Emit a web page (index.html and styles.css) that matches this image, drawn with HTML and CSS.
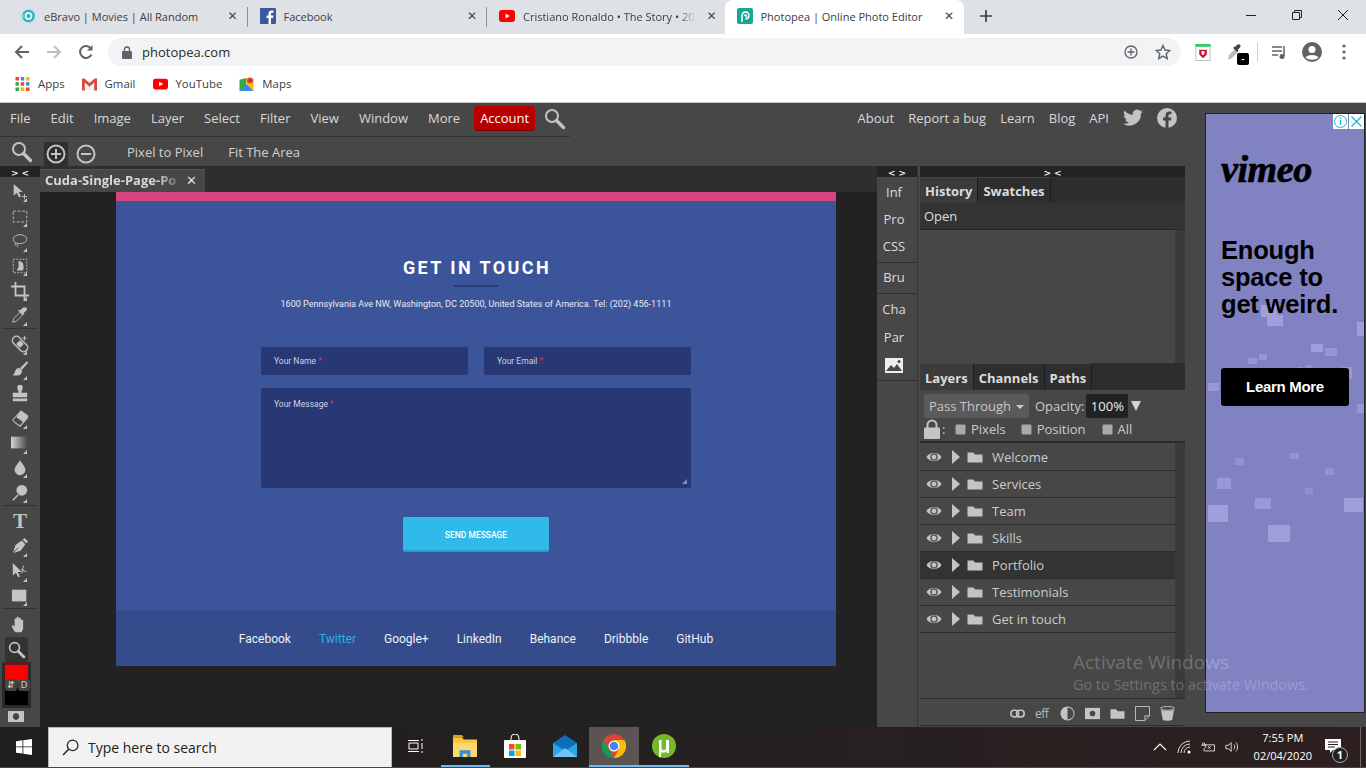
FILE: index.html
```html
<!DOCTYPE html>
<html lang="en">
<head>
    <meta charset="UTF-8">
    <title>Photopea | Online Photo Editor</title>
    <link rel="stylesheet" href="styles.css">
</head>
<body>
    <svg class="sprite" width="0" height="0">
        <symbol id="i-search" viewBox="0 0 22 22"><circle cx="8" cy="8" r="6" fill="none" stroke="currentColor" stroke-width="2"/><path d="M12.5 12.5l7 7" stroke="currentColor" stroke-width="3.4" stroke-linecap="round"/></symbol>
        <symbol id="i-eye" viewBox="0 0 16 12"><path d="M0.5 6C3 0.5 13 0.5 15.5 6 13 11.5 3 11.5 0.5 6z" fill="#c4c4c4"/><circle cx="8" cy="6" r="3.8" fill="#5a5a5a"/><circle cx="8" cy="6" r="2.3" fill="#c4c4c4"/></symbol>
        <symbol id="i-folder" viewBox="0 0 16 12"><path d="M0.5 1.5h6l1.5 2h7.5v8h-15z" fill="#c4c4c4"/></symbol>
        <symbol id="i-yt" viewBox="0 0 16 12"><rect width="16" height="12" rx="3" fill="#f00"/><path d="M6.5 3.5l4.500 2.500-4.500 2.500z" fill="#fff"/></symbol>
    </svg>

    <!-- browser chrome -->
    <div class="tabstrip">
        <div class="tab">
            <svg class="favicon" viewBox="0 0 16 16"><circle cx="8.5" cy="8" r="6.5" fill="#38b6c6"/><circle cx="8.5" cy="8" r="3" fill="none" stroke="#fff" stroke-width="1.5"/><circle cx="2.5" cy="8" r="1.5" fill="#8fd6df"/></svg>
            <span class="tab-title">eBravo | Movies | All Random</span>
            <span class="tab-x">✕</span>
        </div>
        <div class="tab">
            <svg class="favicon" viewBox="0 0 16 16"><rect width="16" height="16" rx="1" fill="#3b5998"/><path d="M11 16V10h2l.4-2.500H11V6c0-.8.3-1.300 1.300-1.300h1.200V2.500c-.6-.1-1.200-.1-1.800-.1C9.800 2.400 8.500 3.500 8.500 5.600v1.900H6.500V10h2v6z" fill="#fff"/></svg>
            <span class="tab-title">Facebook</span>
            <span class="tab-x">✕</span>
        </div>
        <div class="tab">
            <svg class="favicon" viewBox="0 0 16 16"><use href="#i-yt" width="16" height="12" y="2"/></svg>
            <span class="tab-title tab-fade">Cristiano Ronaldo • The Story • 20</span>
            <span class="tab-x">✕</span>
        </div>
        <div class="tab tab-active">
            <svg class="favicon" viewBox="0 0 16 16"><rect width="16" height="16" rx="2" fill="#18a497"/><path d="M5 14V7.500a3.500 3.500 0 1 1 3.500 3.500M7.500 8a1 1 0 1 1 1 1" fill="none" stroke="#fff" stroke-width="1.5"/></svg>
            <span class="tab-title">Photopea | Online Photo Editor</span>
            <span class="tab-x">✕</span>
        </div>
        <svg class="newtab" viewBox="0 0 12 12"><path d="M6 0v12M0 6h12" stroke="#3c4043" stroke-width="1.7"/></svg>
        <div class="winbtns">
            <svg viewBox="0 0 12 12"><path d="M1 6.5h10" stroke="#222"/></svg>
            <svg viewBox="0 0 12 12"><path d="M1.500 3.500h7v7h-7zM3.500 3.500v-2h7v7h-2" fill="none" stroke="#222"/></svg>
            <svg viewBox="0 0 12 12"><path d="M1 1l10 10M11 1L1 11" stroke="#222"/></svg>
        </div>
    </div>

    <div class="addressbar">
        <svg class="navbtn" viewBox="0 0 16 16"><path d="M15 8H2M8 2L2 8l6 6" fill="none" stroke="#5f6368" stroke-width="2"/></svg>
        <svg class="navbtn" viewBox="0 0 16 16"><path d="M1 8h13M8 2l6 6-6 6" fill="none" stroke="#bcbec1" stroke-width="2"/></svg>
        <svg class="navbtn" viewBox="0 0 16 16"><path d="M13.500 10.500A6 6 0 1 1 13 4.500" fill="none" stroke="#5f6368" stroke-width="2"/><path d="M14.500 1v5.500H9z" fill="#5f6368"/></svg>
        <div class="omnibox">
            <svg class="lock" viewBox="0 0 10 13"><path d="M2.500 6V3.500a2.500 2.500 0 0 1 5 0V6" fill="none" stroke="#5f6368" stroke-width="1.3"/><rect y="5" width="10" height="8" rx="1" fill="#5f6368"/></svg>
            <span class="url">photopea.com</span>
            <svg class="omni-icon add" viewBox="0 0 14 14"><circle cx="7" cy="7" r="6" fill="none" stroke="#5f6368" stroke-width="1.3"/><path d="M7 3.500v7M3.500 7h7" stroke="#5f6368" stroke-width="1.3"/></svg>
            <svg class="omni-icon" viewBox="0 0 16 16"><path d="M8 1.500l2 4.500 4.800.5-3.600 3.200 1 4.800L8 12.100l-4.200 2.400 1-4.800L1.200 6.500 6 6z" fill="none" stroke="#5f6368" stroke-width="1.4"/></svg>
        </div>
        <div class="ext-icons">
            <svg class="ext ext-mcafee" viewBox="0 0 16 18"><rect x=".5" y=".5" width="15" height="17" fill="#fff" stroke="#bbb"/><rect width="16" height="3" fill="#2ecc71"/><path d="M4 6h8v5l-4 4-4-4z" fill="#c8102e"/><path d="M6.500 7.500h3v3l-1.500 1.500-1.500-1.500z" fill="#fff"/></svg>
            <div class="ext ext-dropper">
                <svg viewBox="0 0 16 18"><path d="M1 17l1-5 6-6 3 3-6 6z" fill="#b9bbbe"/><path d="M8 4l2-2c1-1 2.200-1 3-.2s.8 2-.2 3l-2 2 .7.700-1.400 1.400-4-4 1.400-1.400z" fill="#444"/></svg>
                <span class="ext-badge">-</span>
            </div>
            <span class="ext-sep"></span>
            <svg class="ext ext-list" viewBox="0 0 16 16"><path d="M1 3h10M1 7h10M1 11h6" stroke="#5f6368" stroke-width="1.5"/><path d="M13 2v10" stroke="#5f6368" stroke-width="1.5"/><circle cx="11" cy="12.5" r="2.5" fill="#5f6368"/></svg>
            <svg class="ext ext-avatar" viewBox="0 0 20 20"><circle cx="10" cy="10" r="10" fill="#5f6368"/><circle cx="10" cy="7.5" r="3.5" fill="#fff"/><path d="M3.500 15.500C5 12 15 12 16.500 15.500 13 18.500 7 18.500 3.500 15.500z" fill="#fff"/></svg>
            <svg class="ext ext-dots" viewBox="0 0 4 16"><circle cx="2" cy="2" r="1.6" fill="#5f6368"/><circle cx="2" cy="8" r="1.6" fill="#5f6368"/><circle cx="2" cy="14" r="1.6" fill="#5f6368"/></svg>
        </div>
    </div>

    <div class="bookmarks">
        <a class="bm">
            <svg viewBox="0 0 14 14"><g><rect width="3.5" height="3.5" fill="#ea4335"/><rect x="5.2" width="3.5" height="3.5" fill="#4285f4"/><rect x="10.5" width="3.5" height="3.5" fill="#fbbc04"/><rect y="5.2" width="3.5" height="3.5" fill="#34a853"/><rect x="5.2" y="5.2" width="3.5" height="3.5" fill="#ea4335"/><rect x="10.5" y="5.2" width="3.5" height="3.5" fill="#4285f4"/><rect y="10.5" width="3.5" height="3.5" fill="#34a853"/><rect x="5.2" y="10.5" width="3.5" height="3.5" fill="#fbbc04"/><rect x="10.5" y="10.5" width="3.5" height="3.5" fill="#ea4335"/></g></svg>
            Apps
        </a>
        <a class="bm">
            <svg viewBox="0 0 16 14"><path d="M3 5.500L8 10l5-4.500V14H3z" fill="#f1f1f1"/><path d="M0 1h2.500L8 6l5.500-5H16v13h-3V5.500L8 10 3 5.500V14H0z" fill="#d54c3f"/></svg>
            Gmail
        </a>
        <a class="bm">
            <svg viewBox="0 0 16 12"><use href="#i-yt"/></svg>
            YouTube
        </a>
        <a class="bm">
            <svg viewBox="0 0 16 16"><path d="M0 3l8-2v15H0z" fill="#34a853"/><path d="M0 16l9-8 7 8z" fill="#4285f4"/><path d="M8 1l8 1v14l-8-8z" fill="#fbbc04"/><circle cx="12" cy="4" r="3.5" fill="#ea4335"/><circle cx="12" cy="4" r="1.2" fill="#a52714"/></svg>
            Maps
        </a>
    </div>

    <!-- photopea -->
    <div class="app">
        <div class="editor">
            <div class="menubar">
                <nav class="menu-left">
                    <span>File</span><span>Edit</span><span>Image</span><span>Layer</span><span>Select</span><span>Filter</span><span>View</span><span>Window</span><span>More</span>
                    <span class="account">Account</span>
                    <svg class="menu-search"><use href="#i-search"/></svg>
                </nav>
                <nav class="menu-right">
                    <span>About</span><span>Report a bug</span><span>Learn</span><span>Blog</span><span>API</span>
                    <svg class="social" viewBox="0 0 24 20"><path d="M24 2.400c-.9.400-1.800.7-2.800.8 1-.6 1.800-1.600 2.200-2.700-1 .6-2 1-3.100 1.200A4.900 4.900 0 0 0 11.900 6.200C7.800 6 4.200 4 1.700.9c-1.300 2.200-.6 5.100 1.500 6.500-.8 0-1.600-.2-2.200-.6 0 2.300 1.600 4.400 3.900 4.900-.7.200-1.500.2-2.200.1.600 2 2.400 3.400 4.600 3.400A9.900 9.900 0 0 1 0 16.900 14 14 0 0 0 21.500 4.500c1-.7 1.800-1.300 2.500-2.100z" fill="#c4c4c4"/></svg>
                    <svg class="social" viewBox="0 0 20 20"><circle cx="10" cy="10" r="10" fill="#c4c4c4"/><path d="M11.500 20v-7.500h2.500l.4-3h-2.900V7.700c0-.9.300-1.400 1.500-1.400h1.500V3.600c-.3 0-1.200-.1-2.200-.1-2.200 0-3.800 1.400-3.800 3.800v2.200H6v3h2.500V20z" fill="#474747"/></svg>
                </nav>
            </div>

            <div class="optionsbar">
                <svg class="opt-search"><use href="#i-search"/></svg>
                <span class="zoombtn zoombtn-on"><svg viewBox="0 0 20 20"><circle cx="10" cy="10" r="8.5" fill="none" stroke="#c4c4c4" stroke-width="2"/><path d="M10 5v10M5 10h10" stroke="#c4c4c4" stroke-width="2"/></svg></span>
                <span class="zoombtn"><svg viewBox="0 0 20 20"><circle cx="10" cy="10" r="8.5" fill="none" stroke="#c4c4c4" stroke-width="2"/><path d="M5 10h10" stroke="#c4c4c4" stroke-width="2"/></svg></span>
                <span class="opt-link first">Pixel to Pixel</span>
                <span class="opt-link">Fit The Area</span>
            </div>

            <div class="workspace">
                <div class="toolbar">
                    <div class="collapse">&gt; &lt;</div>
                    <div class="tools">
                        <div class="tool more"><svg viewBox="0 0 20 20"><path d="M3 1v13l3.500-3 2.500 5 2-1-2.500-5H13z" fill="#c4c4c4"/><path d="M15 12v6M12 15h6" stroke="#c4c4c4"/></svg></div>
                        <div class="tool more"><svg viewBox="0 0 20 20"><rect x="2.5" y="3.5" width="15" height="12" fill="none" stroke="#c4c4c4" stroke-dasharray="3 2"/></svg></div>
                        <div class="tool more"><svg viewBox="0 0 20 20"><ellipse cx="10" cy="8" rx="7.5" ry="5" fill="none" stroke="#c4c4c4"/><path d="M5 12c-2 2 0 3 1 2s2 1 1 3" fill="none" stroke="#c4c4c4"/></svg></div>
                        <div class="tool more"><svg viewBox="0 0 20 20"><rect x="2.5" y="2.5" width="15" height="15" fill="none" stroke="#c4c4c4" stroke-dasharray="2 1.5"/><path d="M8 5c4-1 6 2 6 6s-1 4-4 4H6c3-3 3-6 2-10z" fill="#c4c4c4"/></svg></div>
                        <div class="tool more"><svg viewBox="0 0 20 20"><path d="M5 0v15h15M0 5h15v15" fill="none" stroke="#c4c4c4" stroke-width="2"/></svg></div>
                        <div class="tool more"><svg viewBox="0 0 20 20"><path d="M2 18l1-4 7-7 3 3-7 7z" fill="none" stroke="#c4c4c4"/><path d="M10 5l3-3c1-1 3-1 4 0s1 2 0 3l-3 3 1 1-2 1-5-5 1-1z" fill="#c4c4c4"/></svg></div>
                        <div class="tool-sep"></div>
                        <div class="tool more"><svg viewBox="0 0 20 20"><g transform="rotate(-45 10 10)"><rect x="5.5" y="0" width="9" height="20" rx="4" fill="none" stroke="#c4c4c4" stroke-width="1.5"/><rect x="7" y="7" width="6" height="6" fill="#c4c4c4"/></g><path d="M15 1v5M12.500 3.500h5" stroke="#c4c4c4"/></svg></div>
                        <div class="tool more"><svg viewBox="0 0 20 20"><path d="M18 1l-8 8 2 2 7-8z" fill="#c4c4c4"/><path d="M9 9c-5 0-4 6-7 8 5 1 11 0 10-6z" fill="#c4c4c4"/></svg></div>
                        <div class="tool"><svg viewBox="0 0 20 20"><path d="M7 2.500a3 3 0 0 1 6 0c0 3-1.500 4-1.500 6H18v5H2v-5h6.500C8.500 6.500 7 5.500 7 2.500zM2 15h16v3H2z" fill="#c4c4c4"/></svg></div>
                        <div class="tool more"><svg viewBox="0 0 20 20"><path d="M11 1l7 5a2 2 0 0 1 0 3l-8 9-7-5c-1-1-1-2 0-3l8-9z" fill="none" stroke="#c4c4c4" stroke-width="1.2"/><path d="M11 1l7 5a2 2 0 0 1 0 3l-4 5-8-6z" fill="#c4c4c4"/></svg></div>
                        <div class="tool more"><svg viewBox="0 0 20 20"><defs><linearGradient id="grad"><stop offset="0" stop-color="#d4d4d4"/><stop offset="1" stop-color="#4a4a4a"/></linearGradient></defs><rect x="0" y="3" width="18" height="13" fill="url(#grad)"/></svg></div>
                        <div class="tool more"><svg viewBox="0 0 20 20"><path d="M10 1c1 3 6 7 6 11a6 6 0 0 1-12 0c0-4 5-8 6-11z" fill="#c4c4c4"/></svg></div>
                        <div class="tool more"><svg viewBox="0 0 20 20"><circle cx="12" cy="7" r="6" fill="#c4c4c4"/><path d="M8 12l-6 6" stroke="#c4c4c4" stroke-width="1.5"/></svg></div>
                        <div class="tool-sep"></div>
                        <div class="tool tool-type">T</div>
                        <div class="tool more"><svg viewBox="0 0 20 20"><path d="M2 18l3-9 7-5 4 4-5 7z" fill="#c4c4c4"/><path d="M13 3l2-2 4 4-2 2z" fill="#c4c4c4"/><path d="M2 18l6-6" stroke="#474747"/></svg></div>
                        <div class="tool more"><svg viewBox="0 0 20 20"><path d="M2 1v14l3.500-3 2.500 5 2-1-2.500-5H12z" fill="#c4c4c4"/><path d="M14 4l-2 9M11 8l6 3" stroke="#c4c4c4"/></svg></div>
                        <div class="tool more"><svg viewBox="0 0 20 20"><rect x="1" y="3" width="16" height="13" fill="#c4c4c4"/></svg></div>
                        <div class="tool-sep"></div>
                        <div class="tool"><svg viewBox="0 0 20 20"><path d="M5 18c-2-2-4-5-4-7 0-1 2-1 3 1V4c0-1.500 2-1.500 2 0V2c0-1.500 2.500-1.500 2.500 0v1c0-1.500 2.500-1.500 2.500 0v2c0-1.500 2.500-1 2.500 0v8c0 2-1 4-2 5z" fill="#c4c4c4"/></svg></div>
                        <div class="tool tool-on"><svg viewBox="0 0 22 22"><use href="#i-search"/></svg></div>
                        <div class="swatches">
                            <span class="sw-fg"></span>
                            <span class="sw-bg"></span>
                            <span class="sw-swap">⇵</span>
                            <span class="sw-def">D</span>
                        </div>
                        <div class="mask-btn"></div>
                    </div>
                </div>

                <div class="docarea">
                    <div class="doctabs">
                        <div class="doctab"><span class="doctab-name">Cuda-Single-Page-Po</span><span class="doctab-x">✕</span></div>
                    </div>
                    <div class="canvas">
                        <div class="pinkbar"></div>
                        <section class="contact">
                            <h1>GET IN TOUCH</h1>
                            <div class="rule"></div>
                            <p class="address">1600 Pennsylvania Ave NW, Washington, DC 20500, United States of America. Tel: (202) 456-1111</p>
                            <div class="form-row">
                                <div class="field">Your Name <i>*</i></div>
                                <div class="field">Your Email <i>*</i></div>
                            </div>
                            <div class="field field-msg">Your Message <i>*</i>
                                <svg class="grip" viewBox="0 0 7 7"><path d="M6 1v5H1z" fill="#7f8fbd"/></svg>
                            </div>
                            <div class="sendbtn">SEND MESSAGE</div>
                        </section>
                        <footer class="sitefoot">
                            <span>Facebook</span><span class="hot">Twitter</span><span>Google+</span><span>LinkedIn</span><span>Behance</span><span>Dribbble</span><span>GitHub</span>
                        </footer>
                    </div>
                </div>

                <div class="sidecol">
                    <div class="collapse">&lt; &gt;</div>
                    <div class="side-group">
                        <span>Inf</span><span>Pro</span><span>CSS</span>
                    </div>
                    <div class="side-group">
                        <span>Bru</span>
                    </div>
                    <div class="side-group">
                        <span>Cha</span><span>Par</span>
                        <span class="side-img"><svg viewBox="0 0 18 15"><rect width="18" height="15" fill="#eee"/><path d="M1 13l5-6 3 3 3-4 5 7z" fill="#474747"/><circle cx="14" cy="3.500" r="1.500" fill="#474747"/></svg></span>
                    </div>
                </div>

                <div class="panels">
                    <div class="collapse">&gt; &lt;</div>
                    <div class="ptabs">
                        <span class="ptab on">History</span><span class="ptab">Swatches</span>
                    </div>
                    <div class="hist-open">Open</div>
                    <div class="hist-list"><div class="pane"></div><div class="scroll"></div></div>

                    <div class="ptabs ptabs-tall">
                        <span class="ptab on">Layers</span><span class="ptab">Channels</span><span class="ptab">Paths</span>
                    </div>
                    <div class="layer-opts">
                        <div class="opt-row">
                            <span class="blend">Pass Through <i class="caret"></i></span>
                            <span class="opa-label">Opacity:</span>
                            <span class="opa-val">100%</span>
                            <i class="opa-tri"></i>
                        </div>
                        <div class="lock-row">
                            <svg class="lockico" viewBox="0 0 16 20"><path d="M3.500 9V6a4.500 4.500 0 0 1 9 0v3" fill="none" stroke="#c4c4c4" stroke-width="2"/><rect y="8.500" width="16" height="11.500" rx="1" fill="#c4c4c4"/></svg>
                            <span class="colon">:</span>
                            <label class="chk"><i></i>Pixels</label>
                            <label class="chk"><i></i>Position</label>
                            <label class="chk"><i></i>All</label>
                        </div>
                    </div>
                    <div class="layers">
                        <div class="layer-list">
                            <div class="layer"><svg class="eye"><use href="#i-eye"/></svg><i class="arrow"></i><svg class="folder"><use href="#i-folder"/></svg>Welcome</div>
                            <div class="layer"><svg class="eye"><use href="#i-eye"/></svg><i class="arrow"></i><svg class="folder"><use href="#i-folder"/></svg>Services</div>
                            <div class="layer"><svg class="eye"><use href="#i-eye"/></svg><i class="arrow"></i><svg class="folder"><use href="#i-folder"/></svg>Team</div>
                            <div class="layer"><svg class="eye"><use href="#i-eye"/></svg><i class="arrow"></i><svg class="folder"><use href="#i-folder"/></svg>Skills</div>
                            <div class="layer layer-sel"><svg class="eye"><use href="#i-eye"/></svg><i class="arrow"></i><svg class="folder"><use href="#i-folder"/></svg>Portfolio</div>
                            <div class="layer"><svg class="eye"><use href="#i-eye"/></svg><i class="arrow"></i><svg class="folder"><use href="#i-folder"/></svg>Testimonials</div>
                            <div class="layer"><svg class="eye"><use href="#i-eye"/></svg><i class="arrow"></i><svg class="folder"><use href="#i-folder"/></svg>Get in touch</div>
                        </div>
                        <div class="scroll"></div>
                    </div>
                    <div class="layer-foot">
                        <svg viewBox="0 0 16 10" class="lf"><rect x="1" y="1.5" width="8" height="7" rx="3" fill="none" stroke="#c4c4c4" stroke-width="1.8"/><rect x="7" y="1.5" width="8" height="7" rx="3" fill="none" stroke="#c4c4c4" stroke-width="1.8"/></svg>
                        <span class="lf lf-eff">eff</span>
                        <svg viewBox="0 0 16 16" class="lf"><circle cx="8" cy="8" r="7.5" fill="#c4c4c4"/><path d="M8 1.500a6.500 6.500 0 0 1 0 13z" fill="#474747"/></svg>
                        <svg viewBox="0 0 16 12" class="lf"><rect width="16" height="12" fill="#c4c4c4"/><circle cx="8" cy="6" r="3" fill="#474747"/></svg>
                        <svg viewBox="0 0 16 12" class="lf"><use href="#i-folder"/></svg>
                        <svg viewBox="0 0 16 16" class="lf"><path d="M.5.500h15v10l-5 5h-10zM15.500 10.500h-5v5" fill="none" stroke="#c4c4c4"/></svg>
                        <svg viewBox="0 0 16 16" class="lf"><ellipse cx="8" cy="2.500" rx="7.5" ry="2" fill="none" stroke="#c4c4c4"/><path d="M1 4c3 1.500 11 1.500 14 0l-2 11c-2 1-8 1-10 0z" fill="#c4c4c4"/></svg>
                    </div>
                </div>
            </div>
        </div>

        <aside class="adcol">
            <div class="ad">
                <svg class="ad-bits" viewBox="0 0 160 600">
                    <g fill="#a09fdc">
                        <rect x="56" y="192" width="17" height="12"/><rect x="62" y="202" width="16" height="11"/><rect x="152" y="209" width="10" height="14"/>
                        <rect x="106" y="231" width="12" height="8"/><rect x="120" y="235" width="12" height="8" opacity=".7"/><rect x="43" y="245" width="9" height="6" opacity=".7"/>
                        <rect x="54" y="241" width="8" height="6" opacity=".7"/><rect x="92" y="254" width="5" height="4" opacity=".6"/><rect x="101" y="252" width="6" height="4" opacity=".6"/>
                        <rect x="137" y="254" width="10" height="12" opacity=".7"/><rect x="3" y="270" width="11" height="8" opacity=".8"/><rect x="152" y="291" width="10" height="9" opacity=".7"/>
                        <rect x="12" y="365" width="14" height="11" opacity=".8"/><rect x="50" y="385" width="16" height="11" opacity=".8"/><rect x="139" y="385" width="19" height="14"/>
                        <rect x="3" y="392" width="20" height="17"/><rect x="63" y="412" width="22" height="17"/><rect x="120" y="355" width="9" height="7" opacity=".6"/>
                        <rect x="85" y="340" width="9" height="6" opacity=".6"/><rect x="30" y="345" width="9" height="7" opacity=".6"/><rect x="100" y="375" width="8" height="6" opacity=".5"/>
                    </g>
                </svg>
                <div class="ad-close">
                    <svg viewBox="0 0 15 15"><circle cx="7.5" cy="7.5" r="6" fill="none" stroke="#14b8dc"/><path d="M7.500 6v5M7.500 3.500v1.500" stroke="#14b8dc" stroke-width="1.3"/></svg>
                    <svg viewBox="0 0 15 15"><path d="M2.500 2.500l10 10M12.500 2.500l-10 10" stroke="#14b8dc" stroke-width="1.3"/></svg>
                </div>
                <div class="ad-logo">vimeo</div>
                <div class="ad-head">Enough space to get weird.</div>
                <div class="ad-btn">Learn More</div>
            </div>
        </aside>

        <div class="activate">
            <div class="act-1">Activate Windows</div>
            <div class="act-2">Go to Settings to activate Windows.</div>
        </div>
    </div>

    <!-- windows taskbar -->
    <div class="taskbar">
        <svg class="start" viewBox="0 0 16 16"><path d="M0 2.200L6.500 1.300v6.200H0zM7.300 1.200L16 0v7.500H7.300zM0 8.300h6.500v6.300L0 13.800zM7.300 8.300H16V16l-8.700-1.200z" fill="#fff"/></svg>
        <div class="searchbox">
            <svg viewBox="0 0 16 16"><circle cx="10" cy="6" r="5" fill="none" stroke="#222" stroke-width="1.2"/><path d="M6.300 9.700L1 15" stroke="#222" stroke-width="1.4"/></svg>
            Type here to search
        </div>
        <div class="task-apps">
            <span class="app-btn"><svg viewBox="0 0 16 16"><path d="M0 2.500h11M0 13.500h11M1 5h9v6H1zM14 1v2M14 5v6M14 13v2" fill="none" stroke="#fff"/></svg></span>
            <span class="app-btn running"><svg class="big" viewBox="0 0 22 22"><path d="M0 3h8l2 2h12v16H0z" fill="#f6c544"/><path d="M0 1h8l2 2H0z" fill="#d9a520"/><rect y="8" width="22" height="13" fill="#ffd96b"/><path d="M6 21v-6h10v6h-3v-3H9v3z" fill="#2f8fdc"/></svg></span>
            <span class="app-btn"><svg class="big" viewBox="0 0 22 24"><path d="M7 6V4a4 4 0 0 1 8 0v2" fill="none" stroke="#fff"/><rect y="6" width="22" height="18" rx="1" fill="#fff"/><rect x="5" y="10" width="5.5" height="5.5" fill="#f25022"/><rect x="11.5" y="10" width="5.5" height="5.5" fill="#7fba00"/><rect x="5" y="16.5" width="5.5" height="5.5" fill="#00a4ef"/><rect x="11.5" y="16.5" width="5.5" height="5.5" fill="#ffb900"/></svg></span>
            <span class="app-btn"><svg class="big" viewBox="0 0 24 24"><path d="M12 1L0 9v14h24V9z" fill="#0f6cbd"/><path d="M0 9l12 8 12-8v14H0z" fill="#2aa5ea"/><path d="M0 23l12-9 12 9z" fill="#6fc6f5"/></svg></span>
            <span class="app-btn running active"><svg class="big" viewBox="0 0 24 24"><circle cx="12" cy="12" r="12" fill="#db4437"/><path d="M12 24A12 12 0 0 1 1.600 6l5.200 9 5 9z" fill="#0f9d58"/><path d="M12 24a12 12 0 0 0 10.400-18H12l5 9z" fill="#fbbc05"/><circle cx="12" cy="12" r="5.5" fill="#fff"/><circle cx="12" cy="12" r="4.3" fill="#4285f4"/></svg></span>
            <span class="app-btn running"><svg class="big" viewBox="0 0 24 24"><circle cx="12" cy="12" r="12" fill="#76b82a"/><path d="M7 6h2.500v8c0 3 4.500 3 4.500 0V6h3v13h-2.500v-2c-1 2-3.500 2-5 1l-.5 5H7z" fill="#fff"/></svg></span>
        </div>
        <div class="tray">
            <svg class="tray-ico" viewBox="0 0 14 8"><path d="M1 7l6-6 6 6" fill="none" stroke="#fff" stroke-width="1.1"/></svg>
            <svg class="tray-ico" viewBox="0 0 14 14"><path d="M1 13A12 12 0 0 1 13 1M4 13a9 9 0 0 1 9-9M7 13a6 6 0 0 1 6-6" fill="none" stroke="#ddd"/><circle cx="12" cy="12" r="1.5" fill="#fff"/></svg>
            <svg class="tray-ico" viewBox="0 0 16 12"><path d="M4.500 3.500h11v7h-11M2 1v3M4 1v3M0.500 4h5v2l-2 2v3" fill="none" stroke="#eee"/><path d="M8 5l3 3M11 5L8 8" stroke="#eee"/></svg>
            <svg class="tray-ico" viewBox="0 0 16 14"><path d="M1 5h3l3-3v10L4 9H1zM10 4c1.500 1.500 1.500 4.500 0 6M12.500 2c2.500 2.500 2.500 7.500 0 10" fill="none" stroke="#eee"/></svg>
            <div class="clock"><span>7:55 PM</span><span>02/04/2020</span></div>
            <div class="notif">
                <svg viewBox="0 0 16 14"><path d="M0 0h16v11H8l-3 3v-3H0z" fill="#fff"/><path d="M3 3h10M3 5.500h10M3 8h7" stroke="#222"/></svg>
                <span class="notif-num">1</span>
            </div>
        </div>
    </div>
</body>
</html>
```

FILE: styles.css
```css
* {
    box-sizing: border-box;
}
body {
    margin: 0;
    width: 1366px;
    height: 768px;
    overflow: hidden;
    position: relative;
    font-family: "Open Sans", "Noto Sans", sans-serif;
    background: #474747;
}
.sprite {
    position: absolute;
}
i {
    font-style: normal;
}

/* browser */
.tabstrip {
    height: 34px;
    background: #dee1e6;
    display: flex;
    align-items: center;
    padding-left: 8px;
}
.tab {
    width: 239.5px;
    height: 34px;
    display: flex;
    align-items: center;
    padding: 0 9px 2px 12px;
    position: relative;
    font-size: 11px;
    color: #3c4043;
}
.tab::after {
    content: "";
    position: absolute;
    right: 0;
    top: 7px;
    height: 20px;
    width: 1px;
    background: #8e9094;
}
.tab:nth-child(3)::after {
    display: none;
}
.tab-active {
    background: #fff;
    border-radius: 8px 8px 0 0;
    margin-left: -2px;
    padding-right: 9px;
}
.tab-active::after {
    display: none;
}
.favicon {
    width: 16px;
    height: 16px;
    flex: none;
    margin-right: 8px;
}
.tab-title {
    flex: 1;
    white-space: nowrap;
    overflow: hidden;
}
.tab-fade {
    -webkit-mask-image: linear-gradient(90deg, #000 90%, transparent 100%);
}
.tab-x {
    width: 12px;
    margin-left: 10px;
    text-align: center;
    font-size: 12px;
    font-family: "DejaVu Sans", sans-serif;
    font-weight: bold;
    color: #45484c;
}
.newtab {
    width: 12px;
    height: 12px;
    margin-left: 16px;
    margin-bottom: 2px;
}
.winbtns {
    margin-left: auto;
    display: flex;
    gap: 34px;
    padding: 0 17px 4px 0;
}
.winbtns svg {
    width: 12px;
    height: 12px;
}
.addressbar {
    height: 34px;
    background: #fff;
    display: flex;
    align-items: center;
    padding: 2px 0 0 14px;
}
.navbtn {
    width: 16px;
    height: 16px;
    margin-right: 16px;
}
.omnibox {
    width: 1073px;
    height: 28px;
    margin-left: -2px;
    background: #f1f3f4;
    border-radius: 14px;
    display: flex;
    align-items: center;
    padding: 0 10px 0 14px;
}
.lock {
    width: 10px;
    height: 13px;
    margin-right: 10px;
}
.url {
    font-size: 13px;
    color: #2a2c2e;
    flex: 1;
}
.omni-icon {
    width: 16px;
    height: 16px;
}
.omni-icon.add {
    width: 14px;
    height: 14px;
    margin-right: 17px;
}
.ext-icons {
    display: flex;
    align-items: center;
    padding-left: 14px;
}
.ext {
    width: 16px;
    height: 16px;
    position: relative;
}
.ext-mcafee {
    height: 17px;
    margin-right: 16px;
}
.ext-dropper {
    height: 18px;
    margin-right: 14px;
}
.ext-dropper svg {
    width: 16px;
    height: 18px;
}
.ext-badge {
    position: absolute;
    left: 10px;
    top: 10px;
    width: 12px;
    height: 12px;
    border-radius: 2px;
    background: #000;
    color: #fff;
    font-size: 9px;
    line-height: 11px;
    text-align: center;
    font-weight: bold;
}
.ext-sep {
    width: 1px;
    height: 20px;
    background: #ccc;
    margin-right: 13px;
}
.ext-list {
    margin-right: 15px;
}
.ext-avatar {
    width: 20px;
    height: 20px;
    margin-right: 20px;
}
.ext-dots {
    width: 4px;
}
.bookmarks {
    height: 34px;
    background: #fff;
    display: flex;
    align-items: center;
    padding: 0 0 3px 15px;
    gap: 17px;
    font-size: 11.4px;
    color: #3c4043;
}
.bm {
    display: flex;
    align-items: center;
    gap: 8px;
}
.bm svg {
    width: 15px;
    height: 14px;
}

/* app */
.app {
    height: 625px;
    border-top: 1px solid #c9c9c9;
    background: #474747;
    display: flex;
    position: relative;
    color: #ddd;
}
.editor {
    width: 1185px;
    display: flex;
    flex-direction: column;
}
.menubar {
    height: 34px;
    display: flex;
    justify-content: space-between;
    font-size: 13px;
}
.menu-left {
    width: 570px;
    border-bottom: 1px solid #333;
    display: flex;
    align-items: center;
    padding: 0 0 4px 10px;
    gap: 20px;
    color: #d8d8d8;
}
.account {
    background: #b80000;
    color: #fff;
    height: 25px;
    line-height: 24px;
    padding: 0 6px;
    margin-left: -6px;
    margin-top: 1px;
    border-radius: 3px;
    border-bottom: 1px solid #7c0000;
}
.menu-search {
    width: 22px;
    height: 22px;
    color: #c4c4c4;
    margin-left: -11px;
    margin-top: 3px;
}
.menu-right {
    display: flex;
    align-items: center;
    gap: 14px;
    padding: 0 8px 4px 0;
    color: #d8d8d8;
}
.social {
    width: 20px;
    height: 20px;
}
.optionsbar {
    height: 29px;
    display: flex;
    align-items: center;
    padding-left: 11px;
    font-size: 13px;
    color: #d0d0d0;
}
.opt-search {
    width: 22px;
    height: 22px;
    color: #c4c4c4;
    margin-right: 11px;
}
.zoombtn {
    width: 24px;
    height: 24px;
    display: flex;
    align-items: center;
    justify-content: center;
    margin-top: 4px;
    margin-right: 6px;
    border-radius: 3px 3px 0 0;
}
.zoombtn svg {
    width: 20px;
    height: 20px;
}
.zoombtn-on {
    background: #2f2f2f;
}
.opt-link.first {
    margin-left: 23px;
}
.opt-link {
    margin-left: 25px;
}
.workspace {
    flex: 1;
    display: flex;
    min-height: 0;
}
.collapse {
    height: 11px;
    background: #242424;
    color: #eee;
    font-size: 9px;
    line-height: 14px;
    text-align: center;
    font-weight: bold;
    font-family: "DejaVu Sans", sans-serif;
    overflow: hidden;
}
.toolbar {
    width: 40px;
    flex: none;
}
.tools {
    margin: 0 1px;
    height: 549px;
    background: #474747;
    display: flex;
    flex-direction: column;
    padding-top: 2.5px;
}
.tool {
    height: 24.7px;
    flex: none;
    display: flex;
    align-items: center;
    justify-content: center;
    position: relative;
    color: #c4c4c4;
}
.tool svg {
    width: 18px;
    height: 18px;
}
.tool.more::after {
    content: "";
    position: absolute;
    right: 12px;
    bottom: 2px;
    border-style: solid;
    border-width: 0 0 4px 4px;
    border-color: transparent transparent #c4c4c4 transparent;
}
.tool-sep {
    height: 1px;
    margin: 0 2px 3.5px;
    background: #333;
    flex: none;
}
.tool-type {
    font-family: "Liberation Serif", serif;
    font-weight: bold;
    font-size: 21px;
}
.tool-on {
    background: #333;
    width: 23px;
    margin-left: 4px;
    border-radius: 3px;
}
.tool-on svg {
    width: 18px;
    height: 18px;
}
.swatches {
    position: relative;
    height: 46px;
    flex: none;
    margin: 0 1px;
}
.sw-fg {
    position: absolute;
    left: 0;
    top: 0;
    width: 29px;
    height: 24px;
    background: #f00;
    border: 3px solid #2a2a2a;
    border-color: #5a1c1c #2a2a2a;
}
.sw-bg {
    position: absolute;
    left: 0;
    top: 23px;
    width: 29px;
    height: 23px;
    background: #000;
    border: 3px solid #2a2a2a;
}
.sw-swap,
.sw-def {
    position: absolute;
    top: 17px;
    width: 12px;
    height: 12px;
    background: #444;
    border-radius: 3px;
    color: #ddd;
    font-size: 9px;
    line-height: 12px;
    text-align: center;
}
.sw-swap {
    left: 3px;
}
.sw-def {
    left: 16px;
}
.mask-btn {
    width: 16px;
    height: 11px;
    margin: 3px 0 0 7px;
    background: radial-gradient(circle, #474747 3px, #c4c4c4 3.5px);
    flex: none;
}
.docarea {
    width: 837px;
    flex: none;
    background: #222;
}
.doctabs {
    height: 26px;
    background: #2e2e2e;
    padding-top: 3px;
}
.doctab {
    width: 165px;
    height: 23px;
    background: #474747;
    border-top: 1px solid #555;
    display: flex;
    align-items: center;
    padding: 0 0 2px 5px;
    font-size: 13px;
    font-weight: 700;
    color: #d8d8d8;
}
.doctab-name {
    width: 132px;
    white-space: nowrap;
    -webkit-mask-image: linear-gradient(90deg, #000 85%, rgba(0, 0, 0, .25) 100%);
}
.doctab-x {
    margin-left: 9px;
    font-family: "DejaVu Sans", sans-serif;
    font-size: 13px;
    color: #ddd;
}
.canvas {
    width: 720px;
    height: 474px;
    margin-left: 76px;
    background: #3c5499;
    display: flex;
    flex-direction: column;
    font-family: Roboto, sans-serif;
    color: #fff;
}
.pinkbar {
    height: 9px;
    background: #d6457f;
}
.contact {
    flex: 1;
    display: flex;
    flex-direction: column;
    align-items: center;
}
.contact h1 {
    margin: 56px 0 0;
    padding-left: 2px;
    font-size: 18px;
    line-height: 22px;
    font-weight: 700;
    letter-spacing: 2.4px;
}
.rule {
    width: 44px;
    height: 2px;
    margin-top: 6px;
    background: #2a3b78;
}
.address {
    margin: 10px 0 0;
    font-size: 9.05px;
    line-height: 14px;
    color: #e8ebf4;
}
.form-row {
    display: flex;
    gap: 16px;
    margin-top: 36px;
}
.field {
    width: 207px;
    height: 28px;
    background: #283874;
    border-radius: 2px;
    font-size: 8.5px;
    line-height: 28px;
    padding-left: 13px;
    color: #ccd2e4;
}
.field i {
    color: #c0405a;
}
.field-msg {
    width: 430px;
    height: 100px;
    margin-top: 13px;
    line-height: 32px;
    position: relative;
}
.grip {
    position: absolute;
    right: 3px;
    bottom: 3px;
    width: 7px;
    height: 7px;
}
.sendbtn {
    width: 146px;
    height: 35px;
    margin-top: 29px;
    background: #2fbaea;
    border-bottom: 2px solid #269dc9;
    border-radius: 2px;
    font-size: 8.5px;
    font-weight: 500;
    line-height: 36px;
    text-align: center;
}
.sitefoot {
    height: 56px;
    padding-top: 1px;
    background: #344b8c;
    display: flex;
    justify-content: center;
    align-items: center;
    gap: 28px;
    font-size: 12px;
    font-weight: 400;
    color: #eef0f7;
}
.sitefoot .hot {
    color: #2fb0e4;
}
.sidecol {
    width: 41px;
    flex: none;
    border-right: 1px solid #333;
}
.side-group {
    border-bottom: 1px solid #303030;
    display: flex;
    flex-direction: column;
    align-items: center;
    padding: 2px 6px 2px 0;
    font-size: 13px;
    color: #ddd;
}
.side-group span {
    height: 27px;
    line-height: 27px;
}
.side-group:nth-child(3) {
    padding-top: 1px;
}
.side-group:nth-child(4) {
    padding: 0 6px 0 0;
}
.side-group:nth-child(4) span:first-child {
    height: 30px;
    line-height: 30px;
}
.side-group .side-img {
    height: 29px;
}
.side-img svg {
    width: 18px;
    height: 15px;
    display: block;
    margin-top: 7px;
}
.panels {
    width: 265px;
    flex: none;
    margin-left: 2px;
    display: flex;
    flex-direction: column;
}
.ptabs {
    height: 26px;
    background: #2e2e2e;
    display: flex;
    font-size: 13px;
    font-weight: 700;
    color: #dcdcdc;
}
.ptabs-tall {
    height: 27px;
}
.ptab {
    padding: 0 5px 0 5px;
    line-height: 27px;
    border-top: 1px solid #444;
    border-right: 1px solid #1c1c1c;
}
.ptabs-tall .ptab {
    line-height: 28px;
}
.ptab.on {
    background: #3b3b3b;
}
.hist-open {
    height: 27px;
    background: #333;
    border-bottom: 1px solid #262626;
    font-size: 13px;
    line-height: 26px;
    padding-left: 4px;
    color: #ddd;
}
.hist-list {
    height: 133px;
    display: flex;
}
.pane {
    flex: 1;
}
.scroll {
    width: 10px;
    flex: none;
    background: #3a3a3a;
}
.layer-opts {
    height: 53px;
    padding: 4px 0 0 4px;
    font-size: 13px;
    border-bottom: 2px solid #2b2b2b;
    color: #ccc;
}
.opt-row {
    display: flex;
    align-items: center;
    height: 24px;
}
.blend {
    width: 105px;
    height: 24px;
    line-height: 24px;
    background: #5a5a5a;
    border-radius: 2px;
    padding-left: 5px;
    position: relative;
    color: #c8c8c8;
}
.caret {
    position: absolute;
    right: 5px;
    top: 11px;
    border-style: solid;
    border-width: 4px 4px 0;
    border-color: #ccc transparent transparent;
}
.opa-label {
    margin-left: 6px;
}
.opa-val {
    width: 42px;
    height: 24px;
    margin-left: 2px;
    line-height: 24px;
    text-align: center;
    background: #222;
    border-radius: 2px;
    color: #eee;
}
.opa-tri {
    margin-left: 3px;
    border-style: solid;
    border-width: 10px 5.5px 0;
    border-color: #d4d4d4 transparent transparent;
}
.lock-row {
    display: flex;
    align-items: center;
    height: 22px;
}
.lockico {
    width: 16px;
    height: 20px;
}
.colon {
    margin: 0 0 0 2px;
    width: 13px;
}
.chk {
    display: flex;
    align-items: center;
    margin-right: 15px;
}
.chk:nth-child(4) {
    margin-right: 16px;
}
.chk i {
    width: 11px;
    height: 11px;
    margin-right: 5px;
    background: #aaa;
    border: 1px solid #777;
    border-radius: 2px;
}
.layers {
    flex: 1;
    display: flex;
}
.layer-list {
    flex: 1;
    padding-top: 1px;
}
.layer {
    height: 27px;
    border-bottom: 1px solid #2c2c2c;
    display: flex;
    align-items: center;
    font-size: 13px;
    color: #ccc;
    padding-left: 6px;
}
.layer-sel {
    background: #333;
}
.eye {
    width: 16px;
    height: 12px;
}
.arrow {
    margin-left: 10px;
    border-style: solid;
    border-width: 7px 0 7px 8px;
    border-color: transparent transparent transparent #c4c4c4;
}
.folder {
    width: 16px;
    height: 12px;
    margin: 0 9px 0 7px;
}
.layer-foot {
    height: 28px;
    border-top: 1px solid #2c2c2c;
    border-bottom: 1px solid #2c2c2c;
    display: flex;
    align-items: center;
    justify-content: flex-end;
    gap: 10px;
    padding: 2px 10px 0 0;
    margin-bottom: 1px;
}
.lf {
    width: 15px;
    height: 15px;
}
.lf-eff {
    height: auto;
    font-size: 12px;
    color: #bbb;
    letter-spacing: -.5px;
    white-space: nowrap;
}
.adcol {
    flex: 1;
    padding: 10px 1px 0 20px;
}
.ad {
    width: 160px;
    height: 600px;
    background: #8082c2;
    border: 1px solid #1f1f1f;
    position: relative;
    color: #000;
    padding: 0 0 0 15px;
    font-family: "Liberation Sans", sans-serif;
    overflow: hidden;
}
.ad-bits {
    position: absolute;
    left: -1px;
    top: -1px;
    width: 160px;
    height: 600px;
}
.ad-close {
    position: absolute;
    right: 0;
    top: 0;
    display: flex;
    gap: 1px;
}
.ad-close svg {
    width: 15px;
    height: 15px;
    background: #fff;
    display: block;
}
.ad-logo {
    position: relative;
    margin-top: 34px;
    font-family: "Liberation Serif", serif;
    font-weight: bold;
    font-style: italic;
    font-size: 38px;
    line-height: 42px;
    letter-spacing: -.4px;
    -webkit-text-stroke: .7px #000;
}
.ad-head {
    position: relative;
    margin-top: 47px;
    font-size: 25.5px;
    line-height: 27px;
    font-weight: bold;
    width: 130px;
    letter-spacing: -.2px;
}
.ad-btn {
    position: relative;
    width: 128px;
    height: 38px;
    margin-top: 50px;
    background: #000;
    border-radius: 3px;
    color: #fff;
    font-size: 15px;
    font-weight: bold;
    line-height: 37px;
    text-align: center;
    letter-spacing: -.3px;
}
.activate {
    position: absolute;
    left: 1073px;
    top: 548px;
    color: rgba(255, 255, 255, .24);
    white-space: nowrap;
    pointer-events: none;
}
.act-1 {
    font-size: 19px;
    line-height: 22px;
}
.act-2 {
    font-size: 14.4px;
    line-height: 22px;
    margin-top: 1px;
}

/* taskbar */
.taskbar {
    height: 40px;
    background: linear-gradient(90deg, #1f1e1c 0%, #242120 50%, #2e1f20 100%);
    display: flex;
    align-items: center;
    color: #fff;
}
.start {
    width: 16px;
    height: 16px;
    margin: 0 16px;
    flex: none;
}
.searchbox {
    width: 344px;
    height: 40px;
    background: #f2f2f2;
    border: 1px solid #b8b8b8;
    border-bottom: none;
    display: flex;
    align-items: center;
    padding-left: 13px;
    gap: 9px;
    font-size: 14px;
    color: #222;
}
.searchbox svg {
    width: 17px;
    height: 17px;
}
.task-apps {
    display: flex;
    margin-left: -1px;
}
.app-btn {
    width: 49.6px;
    height: 40px;
    display: flex;
    align-items: center;
    justify-content: center;
    border-bottom: 2px solid transparent;
}
.app-btn svg {
    width: 16px;
    height: 16px;
}
.app-btn svg.big {
    width: 24px;
    height: 24px;
}
.app-btn.running {
    border-bottom-color: #76b9ed;
}
.app-btn.active {
    background: #5a5452;
}
.tray {
    margin-left: auto;
    margin-right: 5px;
    display: flex;
    align-items: center;
    height: 40px;
    padding-right: 11px;
    border-right: 1px solid #6a6a6a;
}
.tray-ico {
    width: 14px;
    height: 14px;
    margin-right: 10px;
}
.clock {
    display: flex;
    flex-direction: column;
    align-items: center;
    font-size: 11px;
    line-height: 18px;
    margin: 0 13px 0 5px;
}
.notif {
    position: relative;
    width: 24px;
    height: 24px;
}
.notif svg {
    width: 16px;
    height: 14px;
    position: absolute;
    left: 0;
    top: 4px;
}
.notif-num {
    position: absolute;
    left: 7px;
    top: 12px;
    width: 16px;
    height: 16px;
    border: 1px solid #aaa;
    border-radius: 50%;
    background: #222;
    font-size: 11px;
    line-height: 14px;
    text-align: center;
    font-weight: bold;
}
```
